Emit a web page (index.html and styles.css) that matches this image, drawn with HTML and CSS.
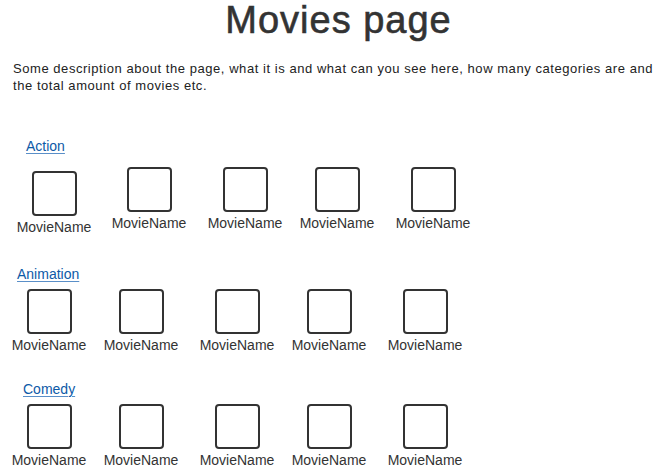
FILE: index.html
```html
<!DOCTYPE html>
<html lang="en">
<head>
<meta charset="utf-8">
<title>Movies page</title>
<link rel="stylesheet" href="styles.css">
</head>
<body>
<h1 class="page-title">Movies page</h1>
<p class="intro">Some description about the page, what it is and what can you see here, how many categories are and the total amount of movies etc.</p>
<main class="categories">
  <section class="category category--action">
    <div class="category-head"><a href="#" class="category-link">Action</a></div>
    <div class="movie-row">
      <div class="movie movie--nudged"><div class="poster"></div><span class="movie-name">MovieName</span></div>
      <div class="movie"><div class="poster"></div><span class="movie-name">MovieName</span></div>
      <div class="movie"><div class="poster"></div><span class="movie-name">MovieName</span></div>
      <div class="movie"><div class="poster"></div><span class="movie-name">MovieName</span></div>
      <div class="movie"><div class="poster"></div><span class="movie-name">MovieName</span></div>
    </div>
  </section>
  <section class="category category--animation">
    <div class="category-head"><a href="#" class="category-link">Animation</a></div>
    <div class="movie-row">
      <div class="movie"><div class="poster"></div><span class="movie-name">MovieName</span></div>
      <div class="movie"><div class="poster"></div><span class="movie-name">MovieName</span></div>
      <div class="movie"><div class="poster"></div><span class="movie-name">MovieName</span></div>
      <div class="movie"><div class="poster"></div><span class="movie-name">MovieName</span></div>
      <div class="movie"><div class="poster"></div><span class="movie-name">MovieName</span></div>
    </div>
  </section>
  <section class="category category--comedy">
    <div class="category-head"><a href="#" class="category-link">Comedy</a></div>
    <div class="movie-row">
      <div class="movie"><div class="poster"></div><span class="movie-name">MovieName</span></div>
      <div class="movie"><div class="poster"></div><span class="movie-name">MovieName</span></div>
      <div class="movie"><div class="poster"></div><span class="movie-name">MovieName</span></div>
      <div class="movie"><div class="poster"></div><span class="movie-name">MovieName</span></div>
      <div class="movie"><div class="poster"></div><span class="movie-name">MovieName</span></div>
    </div>
  </section>
</main>
</body>
</html>
```
FILE: styles.css
```css
html, body {
  margin: 0;
  padding: 0;
  background: #ffffff;
}
body {
  font-family: "Liberation Sans", Arial, sans-serif;
  color: #333333;
  width: 661px;
}
.page-title {
  margin: 0;
  padding-left: 16px;
  text-align: center;
  font-size: 38px;
  line-height: 40px;
  font-weight: normal;
  letter-spacing: 1px;
  color: #333333;
  -webkit-text-stroke: 0.6px #333333;
}
.intro {
  margin: 20px 0 0 0;
  padding-left: 13px;
  width: 645px;
  font-size: 13px;
  line-height: 17px;
  letter-spacing: 0.55px;
  color: #222222;
}
.categories {
  display: flex;
  flex-direction: column;
  gap: 28px;
  margin-top: 44px;
}
.category-head {
  font-size: 14px;
  line-height: 16px;
  height: 16px;
}
.category-link {
  color: #0d5aa7;
  text-decoration: underline;
  text-decoration-color: #5a8fc8;
  text-decoration-thickness: 1px;
  text-underline-offset: 2px;
}
.category--action .category-head { padding-left: 26px; }
.category--animation .category-head { padding-left: 17px; }
.category--comedy .category-head { padding-left: 23px; }

.movie-row {
  display: grid;
  grid-template-columns: 92px 96px 92px 96px 74px;
  align-items: start;
  margin-top: 7px;
  padding-left: 12px;
}
.category--action .movie-row {
  margin-top: 13px;
  padding-left: 20px;
  padding-bottom: 3px;
}
.movie {
  width: 74px;
  display: flex;
  flex-direction: column;
  align-items: center;
}
.movie--nudged {
  margin-left: -3px;
  margin-top: 4px;
}
.poster {
  width: 41px;
  height: 41px;
  border: 2px solid #333333;
  border-radius: 4px;
  box-sizing: content-box;
}
.movie-name {
  margin-top: 3px;
  font-size: 14px;
  line-height: 16px;
  color: #333333;
  white-space: nowrap;
}
```
